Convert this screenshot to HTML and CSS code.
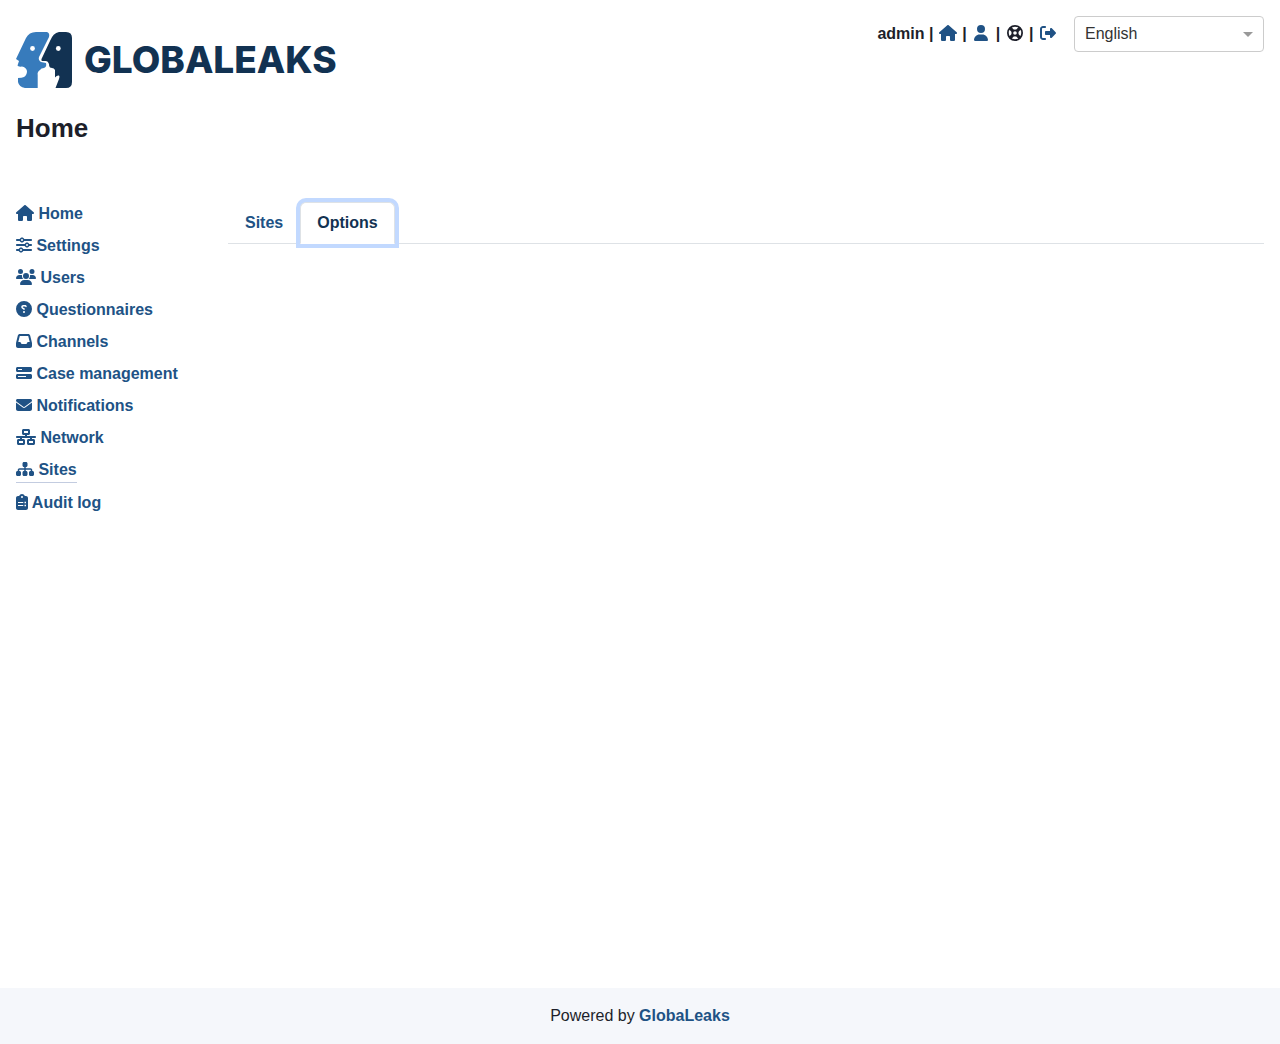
FILE: index.html
```html
<!DOCTYPE html>
<html lang="en">
<head>
<meta charset="utf-8">
<title>GlobaLeaks</title>
<meta name="viewport" content="width=device-width, initial-scale=1">
<link rel="stylesheet" href="styles.css">
</head>
<body>
<svg class="sprite" aria-hidden="true">
  <symbol id="house" viewBox="0 0 576 512"><path d="M575.8 255.5c0 18-15 32.1-32 32.1h-32l.7 160.2c0 2.7-.2 5.4-.5 8.1V472c0 22.1-17.9 40-40 40H456c-1.1 0-2.2 0-3.3-.1c-1.4 .1-2.8 .1-4.2 .1H416 392c-22.1 0-40-17.9-40-40V448 384c0-17.7-14.3-32-32-32H256c-17.7 0-32 14.3-32 32v64 24c0 22.1-17.9 40-40 40H160 128.1c-1.5 0-3-.1-4.5-.2c-1.2 .1-2.4 .2-3.6 .2H104c-22.1 0-40-17.9-40-40V360c0-.9 0-1.9 .1-2.8V287.6H32c-18 0-32-14-32-32.1c0-9 3-17 10-24L266.4 8c7-7 15-8 22-8s15 2 21 7L564.8 231.5c8 7 12 15 11 24z"/></symbol>
  <symbol id="user" viewBox="0 0 448 512"><path d="M224 256A128 128 0 1 0 224 0a128 128 0 1 0 0 256zm-45.7 48C79.8 304 0 383.8 0 482.3C0 498.7 13.3 512 29.7 512H418.3c16.4 0 29.7-13.3 29.7-29.7C448 383.8 368.2 304 269.7 304H178.3z"/></symbol>
  <symbol id="life-ring" viewBox="0 0 512 512"><g fill="none" stroke="currentColor" stroke-width="56"><circle cx="256" cy="256" r="228"/><circle cx="256" cy="256" r="86"/><path d="M76 110L176 210M110 76L210 176M436 110L336 210M402 76L302 176M76 402L176 302M110 436L210 336M436 402L336 302M402 436L302 336"/></g></symbol>
  <symbol id="exit" viewBox="0 0 512 512"><path d="M377.9 105.9L500.7 228.7c7.2 7.2 11.3 17.1 11.3 27.3s-4.1 20.1-11.3 27.3L377.9 406.1c-6.4 6.4-15 9.9-24 9.9c-18.7 0-33.9-15.2-33.9-33.9l0-62.1-128 0c-17.7 0-32-14.3-32-32l0-64c0-17.7 14.3-32 32-32l128 0 0-62.1c0-18.7 15.2-33.9 33.9-33.9c9 0 17.6 3.6 24 9.9zM160 96L96 96c-17.7 0-32 14.3-32 32l0 256c0 17.7 14.3 32 32 32l64 0c17.7 0 32 14.3 32 32s-14.3 32-32 32l-64 0c-53 0-96-43-96-96L0 128C0 75 43 32 96 32l64 0c17.7 0 32 14.3 32 32s-14.3 32-32 32z"/></symbol>
  <symbol id="sliders" viewBox="0 0 512 512"><path d="M0 416c0 17.7 14.3 32 32 32l54.7 0c12.3 28.3 40.5 48 73.3 48s61-19.7 73.3-48L480 448c17.7 0 32-14.3 32-32s-14.3-32-32-32l-246.7 0c-12.3-28.3-40.5-48-73.3-48s-61 19.7-73.3 48L32 384c-17.7 0-32 14.3-32 32zm128 0a32 32 0 1 1 64 0 32 32 0 1 1 -64 0zM320 256a32 32 0 1 1 64 0 32 32 0 1 1 -64 0zm32-80c-32.8 0-61 19.7-73.3 48L32 224c-17.7 0-32 14.3-32 32s14.3 32 32 32l246.7 0c12.3 28.3 40.5 48 73.3 48s61-19.7 73.3-48l54.7 0c17.7 0 32-14.3 32-32s-14.3-32-32-32l-54.7 0c-12.3-28.3-40.5-48-73.3-48zM192 128a32 32 0 1 1 0-64 32 32 0 1 1 0 64zm73.3-64C253 35.7 224.8 16 192 16s-61 19.7-73.3 48L32 64C14.3 64 0 78.3 0 96s14.3 32 32 32l86.7 0c12.3 28.3 40.5 48 73.3 48s61-19.7 73.3-48L480 128c17.7 0 32-14.3 32-32s-14.3-32-32-32L265.3 64z"/></symbol>
  <symbol id="users" viewBox="0 0 640 512"><path d="M144 0a80 80 0 1 1 0 160A80 80 0 1 1 144 0zM512 0a80 80 0 1 1 0 160A80 80 0 1 1 512 0zM0 298.7C0 239.8 47.8 192 106.7 192h42.7c15.9 0 31 3.5 44.6 9.7c-1.3 7.2-1.9 14.7-1.9 22.3c0 38.2 16.8 72.5 43.3 96c-.2 0-.4 0-.7 0H21.3C9.6 320 0 310.4 0 298.7zM405.3 320c-.2 0-.4 0-.7 0c26.6-23.5 43.3-57.8 43.3-96c0-7.6-.7-15-1.9-22.3c13.6-6.3 28.7-9.7 44.6-9.7h42.7C592.2 192 640 239.8 640 298.7c0 11.8-9.6 21.3-21.3 21.3H405.3zM224 224a96 96 0 1 1 192 0 96 96 0 1 1 -192 0zM128 485.3C128 411.7 187.7 352 261.3 352H378.7C452.3 352 512 411.7 512 485.3c0 14.7-11.9 26.7-26.7 26.7H154.7c-14.7 0-26.7-11.9-26.7-26.7z"/></symbol>
  <symbol id="question" viewBox="0 0 512 512"><path transform="matrix(-1 0 0 1 512 0)" fill-rule="evenodd" d="M256 512A256 256 0 1 0 256 0a256 256 0 1 0 0 512zM169.8 165.3c7.9-22.3 29.1-37.3 52.8-37.3h58.3c34.9 0 63.1 28.3 63.1 63.1c0 22.6-12.1 43.5-31.7 54.8L280 264.4c-.2 13-10.9 23.6-24 23.6c-13.3 0-24-10.7-24-24V250.5c0-8.6 4.6-16.5 12.1-20.8l44.3-25.4c4.7-2.7 7.6-7.7 7.6-13.1c0-8.4-6.8-15.1-15.1-15.1H222.6c-3.4 0-6.4 2.1-7.5 5.3l-.4 1.2c-4.4 12.5-18.2 19-30.6 14.6s-19-18.2-14.6-30.6l.4-1.2zM224 352a32 32 0 1 1 64 0 32 32 0 1 1 -64 0z"/></symbol>
  <symbol id="inbox" viewBox="0 0 512 512"><path d="M121 32C91.6 32 66 52 58.9 80.5L1.9 308.4C.6 313.5 0 318.7 0 323.9V416c0 35.3 28.7 64 64 64H448c35.3 0 64-28.7 64-64V323.9c0-5.2-.6-10.4-1.9-15.5l-57-227.9C446 52 420.4 32 391 32H121zm0 64H391l48 192H387.8c-12.1 0-23.2 6.8-28.6 17.7l-14.3 28.6c-5.4 10.8-16.5 17.7-28.6 17.7H195.8c-12.1 0-23.2-6.8-28.6-17.7l-14.3-28.6c-5.4-10.8-16.5-17.7-28.6-17.7H73L121 96z"/></symbol>
  <symbol id="bars" viewBox="0 0 512 512"><path fill-rule="evenodd" d="M64 128H192V160H64zM48 64C21.500 64 0 85.500 0 112v64c0 26.500 21.500 48 48 48H464c26.500 0 48-21.500 48-48V112c0-26.500-21.500-48-48-48H48zM64 352H320V384H64zM48 288c-26.500 0-48 21.500-48 48v64c0 26.500 21.500 48 48 48H464c26.500 0 48-21.500 48-48V336c0-26.500-21.500-48-48-48H48z"/></symbol>
  <symbol id="envelope" viewBox="0 0 512 512"><path d="M48 64C21.500 64 0 85.500 0 112c0 15.100 7.100 29.300 19.200 38.400L236.800 313.600c11.400 8.500 27 8.500 38.400 0L492.800 150.400c12.100-9.100 19.200-23.300 19.200-38.400c0-26.500-21.500-48-48-48H48zM0 176V384c0 35.300 28.700 64 64 64H448c35.300 0 64-28.700 64-64V176L294.400 339.200c-22.800 17.100-54 17.100-76.800 0L0 176z"/></symbol>
  <symbol id="network" viewBox="0 0 640 512"><path fill-rule="evenodd" d="M256 64H384v64H256V64zM240 0c-26.500 0-48 21.500-48 48v96c0 26.500 21.500 48 48 48h48v32H32c-17.700 0-32 14.300-32 32s14.300 32 32 32h96v32H80c-26.500 0-48 21.500-48 48v96c0 26.500 21.500 48 48 48H240c26.500 0 48-21.500 48-48V368c0-26.500-21.500-48-48-48H192V288H448v32H400c-26.500 0-48 21.500-48 48v96c0 26.500 21.500 48 48 48H560c26.500 0 48-21.500 48-48V368c0-26.500-21.500-48-48-48H512V288h96c17.700 0 32-14.300 32-32s-14.300-32-32-32H352V192h48c26.500 0 48-21.500 48-48V48c0-26.500-21.500-48-48-48H240zM96 448V384H224v64H96zm320-64H544v64H416V384z"/></symbol>
  <symbol id="sitemap" viewBox="0 0 576 512"><path d="M208 80c0-26.500 21.500-48 48-48h64c26.500 0 48 21.500 48 48v64c0 26.500-21.500 48-48 48h-8v40H464c30.900 0 56 25.100 56 56v32h8c26.500 0 48 21.500 48 48v64c0 26.500-21.500 48-48 48H464c-26.500 0-48-21.500-48-48V368c0-26.500 21.500-48 48-48h8V288c0-4.400-3.600-8-8-8H312v40h8c26.500 0 48 21.500 48 48v64c0 26.500-21.500 48-48 48H256c-26.500 0-48-21.500-48-48V368c0-26.500 21.500-48 48-48h8V280H112c-4.400 0-8 3.600-8 8v32h8c26.500 0 48 21.500 48 48v64c0 26.500-21.500 48-48 48H48c-26.500 0-48-21.500-48-48V368c0-26.500 21.500-48 48-48h8V288c0-30.900 25.100-56 56-56H264V192h-8c-26.500 0-48-21.500-48-48V80z"/></symbol>
  <symbol id="clipboard" viewBox="0 0 384 512"><path fill-rule="evenodd" d="M192 0c-41.800 0-77.400 26.700-90.500 64H64C28.700 64 0 92.700 0 128V448c0 35.300 28.700 64 64 64H320c35.300 0 64-28.700 64-64V128c0-35.300-28.700-64-64-64H282.500C269.400 26.700 233.800 0 192 0zM192 64a32 32 0 1 1 0 64a32 32 0 1 1 0-64zM64 256H232V288H64zM272 248H320V296H272zM64 352H232V384H64zM272 344H320V392H272z"/></symbol>
</svg>

<header class="header">
  <a class="logo" href="#" aria-label="GlobaLeaks">
    <svg class="logo-mark" viewBox="0 0 56 56" aria-hidden="true">
      <path fill="#377bbc" d="M20 0H31Q34 1 33 5L23 25Q22 28 25 30L30 31Q31 35 28 36Q25 36 24 38Q21 40 21.700 43V56H9Q3 55 2 50V46Q6 46 8 45Q11 43 11 39Q10 35 6 34.500Q2 35 1.500 33.500L3 29L0 27L10 6Q13 0 20 0z"/>
      <path fill="#123252" d="M43 0H50Q56 0 56 6V50Q56 56 50 56H39.500L43 47Q44 44 43 43.500Q41 43 39 45.500V38Q38 36 36 36L34 35.500Q33 35 33 32Q32 29 30 29H26Q25 28.500 25.500 27L34 9Q37 1 43 0z"/>
      <circle cx="16.500" cy="16.500" r="2.400" fill="#fff"/><circle cx="42.300" cy="16.500" r="2.400" fill="#fff"/>
    </svg>
    <span class="logo-text">GLOBALEAKS</span>
  </a>
  <div class="tools">
    <div class="account">admin | <a href="#" aria-label="Home"><svg class="icon w20"><use href="#house"/></svg></a> | <a href="#" aria-label="Preferences"><svg class="icon w20"><use href="#user"/></svg></a> | <button type="button" aria-label="Help"><svg class="icon w20"><use href="#life-ring"/></svg></button> | <a href="#" aria-label="Log out"><svg class="icon w20"><use href="#exit"/></svg></a></div>
    <div class="language"><select aria-label="Language"><option>English</option></select></div>
  </div>
</header>
<h1 class="title">Home</h1>

<div class="body">
  <nav class="sidebar">
    <a href="#"><svg class="icon w18"><use href="#house"/></svg> Home</a>
    <a href="#"><svg class="icon w16"><use href="#sliders"/></svg> Settings</a>
    <a href="#"><svg class="icon w20"><use href="#users"/></svg> Users</a>
    <a href="#"><svg class="icon w16"><use href="#question"/></svg> Questionnaires</a>
    <a href="#"><svg class="icon w16"><use href="#inbox"/></svg> Channels</a>
    <a href="#"><svg class="icon w16"><use href="#bars"/></svg> Case management</a>
    <a href="#"><svg class="icon w16"><use href="#envelope"/></svg> Notifications</a>
    <a href="#"><svg class="icon w20"><use href="#network"/></svg> Network</a>
    <a class="active" href="#"><svg class="icon w18"><use href="#sitemap"/></svg> Sites</a>
    <a href="#"><svg class="icon w12"><use href="#clipboard"/></svg> Audit log</a>
  </nav>
  <main class="content">
    <div class="tabs" role="tablist">
      <button class="tab" type="button" role="tab" aria-selected="false">Sites</button>
      <button class="tab selected" type="button" role="tab" aria-selected="true">Options</button>
    </div>
  </main>
</div>

<footer class="footer">Powered by <a href="#">GlobaLeaks</a></footer>
</body>
</html>
```

FILE: styles.css
```css
* { box-sizing: border-box; }
body {
  margin: 0;
  min-height: 100vh;
  display: flex;
  flex-direction: column;
  background: #fff;
  color: #1d1f2a;
  font: 16px/24px "Liberation Sans", Arial, sans-serif;
}
a { color: #205285; font-weight: 700; text-decoration: none; }
button { font: inherit; color: inherit; background: none; border: 0; padding: 0; margin: 0; }
.sprite { display: none; }
.icon { height: 16px; fill: currentColor; vertical-align: -2px; overflow: visible; }
.w12 { width: 12px; }
.w16 { width: 16px; }
.w18 { width: 18px; }
.w20 { width: 20px; }

.header { display: flex; justify-content: space-between; align-items: flex-start; padding: 16px 16px 0; }
.logo { display: flex; align-items: center; gap: 12px; padding: 16px 0; color: #123252; }
.logo-mark { width: 56px; height: 56px; }
.logo-text { font: 800 37px/56px Inter, "Open Sans", sans-serif; }
.tools { display: flex; align-items: center; gap: 16px; }
.account { font-weight: 700; white-space: nowrap; }
.language { position: relative; width: 190px; }
.language select {
  width: 100%;
  height: 36px;
  padding: 0 10px;
  appearance: none;
  border: 1px solid #ccc;
  border-radius: 4px;
  background: #fff;
  color: #333;
  font: inherit;
}
.language::after {
  content: "";
  position: absolute;
  right: 11px;
  top: 16px;
  border: 5px solid transparent;
  border-top-color: #999;
  border-bottom: 0;
  pointer-events: none;
}
.title { margin: 8px 16px 0; font-size: 26px; line-height: 32px; }

.body { flex: 1; display: flex; gap: 32px; padding: 56px 16px 32px; }
.sidebar { width: 180px; display: flex; flex-direction: column; align-items: flex-start; gap: 4px; }
.sidebar a { padding: 2px 0; white-space: nowrap; }
.sidebar .active { padding-bottom: 0; margin-bottom: 2px; border-bottom: 1px solid #c3cce0; }
.content { flex: 1; padding-top: 2px; }
.tabs { display: flex; border-bottom: 1px solid #dee2e6; }
.tab {
  margin-bottom: -1px;
  padding: 8px 16px;
  border: 1px solid transparent;
  border-radius: 6px 6px 0 0;
  color: #205285;
  font-weight: 700;
}
.tab.selected {
  background: #fff;
  border-color: #dee2e6 #dee2e6 #fff;
  color: #123252;
  box-shadow: 0 0 0 4px #c2d9ff;
}
.footer { padding: 16px; background: #f5f7fb; text-align: center; }
```
